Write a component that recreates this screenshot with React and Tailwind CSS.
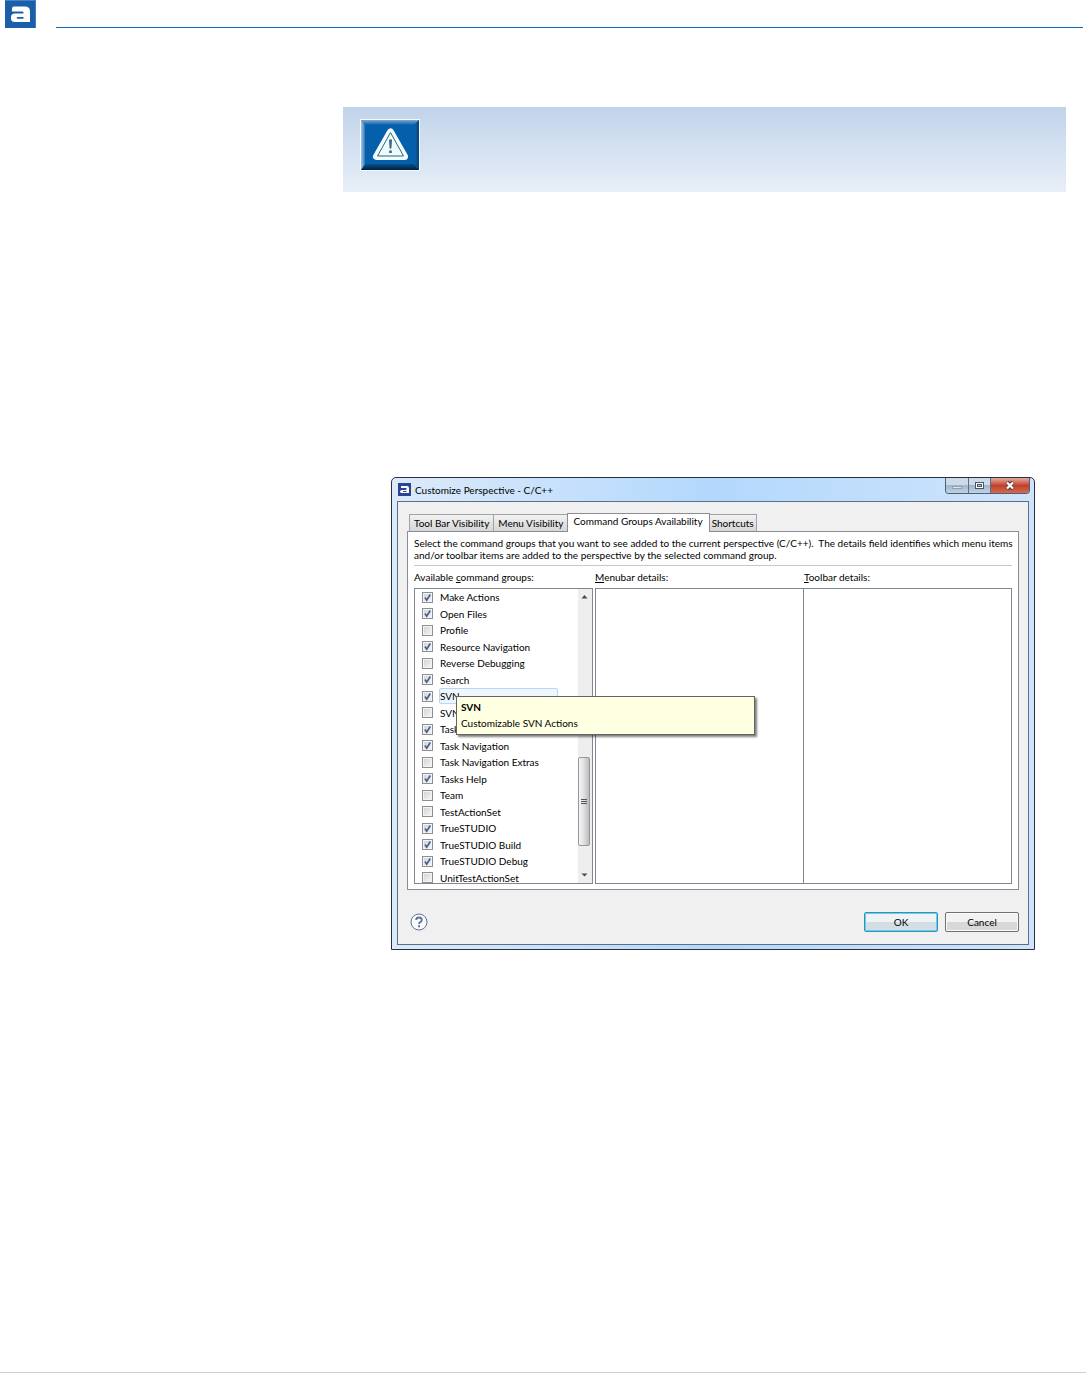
import React from "react";

const GROUPS = [
  ["Make Actions", true],
  ["Open Files", true],
  ["Profile", false],
  ["Resource Navigation", true],
  ["Reverse Debugging", false],
  ["Search", true],
  ["SVN", true],
  ["SVN", false],
  ["Task", true],
  ["Task Navigation", true],
  ["Task Navigation Extras", false],
  ["Tasks Help", true],
  ["Team", false],
  ["TestActionSet", false],
  ["TrueSTUDIO", true],
  ["TrueSTUDIO Build", true],
  ["TrueSTUDIO Debug", true],
  ["UnitTestActionSet", false],
];

function Logo() {
  return (
    <svg viewBox="0 0 31 28" className="h-7 w-[31px] shrink-0" role="img" aria-label="Atollic">
      <rect width="31" height="28" fill="#1b5fa8" />
      <rect width="31" height="1" fill="#3f86c8" />
      <rect x="30" width="1" height="28" fill="#3f7fc0" />
      <path
        fillRule="evenodd"
        fill="#fff"
        d="M9 6.500h11q5 0 5 5V22H10q-4 0-4-3.500v-1.500q0-3.500 4-3.500h8.500v-.800q0-1.200-1.200-1.200H7V8.500q0-2 2-2zM12.800 17q-1.100 0-1.100.900t1.100.900h5.700V17z"
      />
    </svg>
  );
}

function WarningIcon() {
  return (
    <svg viewBox="0 0 60 52" className="h-[52px] w-[60px]" role="img" aria-label="Warning">
      <defs>
        <linearGradient id="bevelLeft" x1="0" x2="1" y1="0" y2="0">
          <stop offset="0" stopColor="#a9c8e4" />
          <stop offset="1" stopColor="#2f76b6" />
        </linearGradient>
        <linearGradient id="bevelTop" x1="0" x2="0" y1="0" y2="1">
          <stop offset="0" stopColor="#7fa9d2" />
          <stop offset="1" stopColor="#0560ac" />
        </linearGradient>
        <linearGradient id="bevelRight" x1="0" x2="1" y1="0" y2="0">
          <stop offset="0" stopColor="#0560ac" />
          <stop offset="1" stopColor="#0a4273" />
        </linearGradient>
        <linearGradient id="bevelBottom" x1="0" x2="0" y1="0" y2="1">
          <stop offset="0" stopColor="#04508f" />
          <stop offset="1" stopColor="#021f3c" />
        </linearGradient>
      </defs>
      <rect width="60" height="52" fill="#f4f8fc" />
      <rect x="1" y="1" width="58" height="50" fill="#0560ac" />
      <path d="M1 1h58l-5 5H5z" fill="url(#bevelTop)" />
      <path d="M1 1l4 5v39l-4 6z" fill="url(#bevelLeft)" />
      <path d="M59 1v50l-4-6V6z" fill="url(#bevelRight)" />
      <path d="M1 51l5-6h48l5 6z" fill="url(#bevelBottom)" />
      <path d="M30.500 13L16.500 37.500h28z" fill="#f3fdff" stroke="#f3fdff" strokeWidth="7" strokeLinejoin="round" />
      <path d="M30.500 13.500L17.500 37h26z" fill="#eefcff" stroke="#2c6474" strokeWidth="1" strokeLinejoin="round" />
      <path d="M29 20.500h3l-.600 9h-1.800zM29.200 31.500h2.600v2.500h-2.600z" fill="#37667c" />
    </svg>
  );
}

function Check({ checked, label }) {
  return (
    <span className="relative block size-[11px] shrink-0">
      <input
        type="checkbox"
        defaultChecked={checked}
        aria-label={label}
        className="peer block size-[11px] appearance-none border border-[#8e8f8f] bg-linear-to-br from-[#cfd3d8] to-[#f6f6f6] shadow-[inset_0_0_0_1px_#f4f4f4]"
      />
      <svg viewBox="0 0 11 11" className="pointer-events-none absolute inset-0 hidden size-[11px] peer-checked:block">
        <path d="M3 5.500L4.700 8.200 8.300 2.500" fill="none" stroke="#4a5f97" strokeWidth="1.700" />
      </svg>
    </span>
  );
}

function Tab({ children, active }) {
  return (
    <button
      type="button"
      role="tab"
      aria-selected={!!active}
      className={
        active
          ? "z-10 -mx-0.5 -mb-px h-[19px] border border-b-0 border-[#8a8c96] bg-white px-1.5 pb-[3px] leading-[15px]"
          : "h-[17px] border border-b-0 border-[#a0a2a8] bg-linear-to-b from-[#f2f2f2] to-[#d6d6d6] px-1 leading-4 not-first:border-l-0 last:pr-0.5"
      }
    >
      {children}
    </button>
  );
}

function ScrollBar() {
  return (
    <div className="flex w-3.5 shrink-0 flex-col items-start bg-[#eeeeee]">
      <svg viewBox="0 0 13 16" className="h-4 w-[13px]">
        <path d="M3.500 9.500L6.500 6l3 3.500z" fill="#4a4a4a" />
      </svg>
      <div className="mt-[152px] flex h-[89px] w-3 flex-col items-center justify-center gap-px rounded-[2px] border border-[#979797] bg-linear-to-r from-[#f5f5f5] via-[#dedfe1] to-[#b9bbbf]">
        <span className="h-px w-1.5 bg-[#555]" />
        <span className="h-px w-1.5 bg-[#555]" />
        <span className="h-px w-1.5 bg-[#555]" />
      </div>
      <svg viewBox="0 0 13 16" className="mt-auto h-4 w-[13px]">
        <path d="M3.500 6.500h6l-3 3z" fill="#4a4a4a" />
      </svg>
    </div>
  );
}

function WindowButtons() {
  return (
    <div className="-mr-px flex h-4 overflow-hidden rounded-b-[4px] border border-t-0 border-[#4f5f74]">
      <button type="button" aria-label="Minimize" className="w-[23px] border-r border-[#5d6d82] bg-linear-to-b from-[#ccdaea] from-45% via-[#a3b6cb] via-50% to-[#bdd2e8]">
        <svg viewBox="0 0 22 15" className="h-[15px] w-[22px]">
          <rect x="6.500" y="8.500" width="9" height="2" fill="#dfe6ee" stroke="#93a0b0" />
        </svg>
      </button>
      <button type="button" aria-label="Maximize" className="w-[22px] border-r border-[#5d6d82] bg-linear-to-b from-[#ccdaea] from-45% via-[#a3b6cb] via-50% to-[#bdd2e8]">
        <svg viewBox="0 0 21 15" className="h-[15px] w-[21px]">
          <rect x="6.500" y="4.500" width="8" height="6" fill="#fff" stroke="#4b5567" />
          <rect x="8.500" y="6.500" width="4" height="2" fill="#b8c6d6" stroke="#4b5567" />
        </svg>
      </button>
      <button type="button" aria-label="Close" className="w-[38px] bg-linear-to-b from-[#e0a195] from-5% via-[#c2402a] via-50% to-[#d46a50]">
        <svg viewBox="0 0 38 15" className="h-[15px] w-[38px]">
          <path d="M16 4l6 7M22 4l-6 7" stroke="#5a3a40" strokeWidth="4" />
          <path d="M16 4.500l6 6M22 4.500l-6 6" stroke="#fff" strokeWidth="2.200" />
        </svg>
      </button>
    </div>
  );
}

function Tooltip() {
  return (
    <div
      role="tooltip"
      className="absolute top-[108px] left-[42px] z-10 h-[39px] w-[299px] border border-[#646464] bg-[#ffffe1] px-1 pt-0.5 leading-4 shadow-[2px_2px_2px_rgba(0,0,0,0.5)]"
    >
      <strong className="block font-bold">SVN</strong>
      <span className="block">Customizable SVN Actions</span>
    </div>
  );
}

function Dialog() {
  return (
    <section
      aria-label="Customize Perspective"
      className="rounded-t-[5px] border border-[#27303c] bg-linear-to-r from-[#dceafa] via-[#b3d8fd] to-[#cfe4fa] px-[5px] pb-1 font-[Lato,sans-serif] text-[10px] leading-3 text-black"
    >
      <header className="flex h-[23px] items-start">
        <div className="flex h-[23px] grow items-center gap-1">
          <svg viewBox="0 0 13 13" className="ml-px size-[13px]">
            <rect width="13" height="13" fill="#2c4494" />
            <path fillRule="evenodd" fill="#fff" d="M3 3h6q2 0 2 2v5H4q-2 0-2-1.500t2-1.500h4.500V5H3zM5 8v1h3.500V8z" />
          </svg>
          <h1>Customize Perspective - C/C++</h1>
        </div>
        <WindowButtons />
      </header>

      <div className="border border-[#5c6f87] bg-[#f0f0f0] px-[9px] pt-[11px]">
        <div role="tablist" className="relative flex items-end pl-0.5">
          <Tab>Tool Bar Visibility</Tab>
          <Tab>Menu Visibility</Tab>
          <Tab active>Command Groups Availability</Tab>
          <Tab>Shortcuts</Tab>
        </div>
        <div className="border border-[#8a8c96] bg-white px-1.5 py-[5px]">
          <p className="-mr-1">
            Select the command groups that you want to see added to the current perspective (C/C++).&nbsp; The details field identifies which menu
            items and/or toolbar items are added to the perspective by the selected command group.
          </p>
          <hr className="mt-1 border-[#c8c8c8]" />
          <div className="grid grid-cols-[181fr_209fr_208fr]">
            <h2 className="py-[5px]">
              Available <u>c</u>ommand groups:
            </h2>
            <h2 className="py-[5px]">
              <u>M</u>enubar details:
            </h2>
            <h2 className="py-[5px]">
              <u>T</u>oolbar details:
            </h2>
            <div className="relative pr-0.5">
              <div className="flex h-[296px] overflow-hidden border border-[#828790]">
                <ul className="flex h-[297px] grow flex-col">
                  {GROUPS.map(([name, checked], i) => (
                    <li key={i} className="flex flex-1 items-center gap-1.5 pl-[7px]">
                      <Check checked={checked} label={name} />
                      <span
                        className={
                          i === 6
                            ? "w-[119px] rounded-[2px] border border-[#b8d6fb] bg-[#eff6fe] leading-[14px]"
                            : "px-px leading-[14px]"
                        }
                      >
                        {name}
                      </span>
                    </li>
                  ))}
                </ul>
                <ScrollBar />
              </div>
              <Tooltip />
            </div>
            <div className="border border-[#828790]" />
            <div className="border border-l-0 border-[#828790]" />
          </div>
        </div>
        <footer className="flex items-center gap-[7px] pt-[22px] pb-3 pl-[3px]">
          <button type="button" aria-label="Help" className="mr-auto">
            <svg viewBox="0 0 18 18" className="size-[18px]" fill="none" stroke="#5f7396">
              <circle cx="9" cy="9" r="8" fill="#fafbfd" strokeWidth="1" />
              <path d="M6.200 7Q6.200 4.500 9 4.500T11.800 7Q11.800 8.300 10.300 9.100 9 9.800 9 11" strokeWidth="1.800" />
              <path d="M8 12.300h2v2H8z" fill="#5f7396" stroke="none" />
            </svg>
          </button>
          <button type="button" className="h-5 w-[74px] rounded-[2px] border border-[#3c8db5] bg-linear-to-b from-[#f0f3f5] from-48% to-[#d2dde4] to-52% shadow-[inset_0_0_0_1px_#62d2f3]">
            OK
          </button>
          <button type="button" className="h-5 w-[74px] rounded-[2px] border border-[#707070] bg-linear-to-b from-[#f2f2f2] from-48% to-[#d8d8d8] to-52% shadow-[inset_0_0_0_1px_#fafafa]">
            Cancel
          </button>
        </footer>
      </div>
    </section>
  );
}

export default function App() {
  return (
    <div className="flex min-h-screen flex-col bg-white">
      <header className="flex items-start gap-5 pr-[3px] pl-[5px]">
        <Logo />
        <div className="mt-[27px] h-px grow bg-[#0f68b0]" />
      </header>
      <main className="grow pt-[79px] pr-5 pl-[343px]">
        <div role="note" className="h-[85px] bg-linear-to-b from-[#c1d3ea] to-[#e8eff8] pt-3 pl-[17px]">
          <WarningIcon />
        </div>
        <div className="mt-[285px] mr-[31px] ml-12">
          <Dialog />
        </div>
      </main>
      <footer className="border-t border-[#cfcfcf]" />
    </div>
  );
}
